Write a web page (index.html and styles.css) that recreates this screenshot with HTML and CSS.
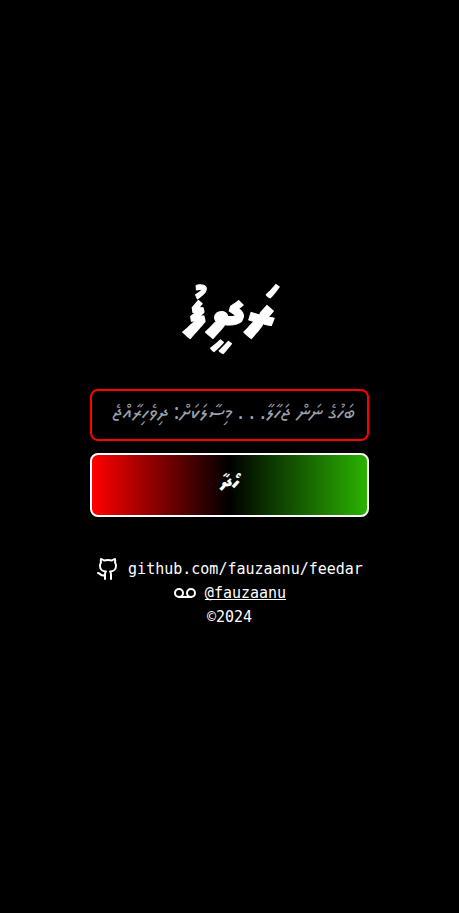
FILE: index.html
```html
<!DOCTYPE html>
<html lang="dv">
<head>
<meta charset="utf-8">
<meta name="viewport" content="width=device-width, initial-scale=1">
<title>ރަދީފު</title>
<link rel="stylesheet" href="styles.css">
</head>
<body>
<main class="page">
  <h1 class="title" dir="rtl">ރަދީފު</h1>
  <form class="search" dir="rtl">
    <input class="search-input" type="text" aria-label="ބަހުގެ ނަން" placeholder="ބަހުގެ ނަން ޖަހާލާ. . . މިސާލަކަށް: ދިވެހިރާއްޖެ">
    <button class="search-button" type="submit">ހޯދާ</button>
  </form>
  <footer class="footer" lang="en">
    <a class="footer-row" href="https://github.com/fauzaanu/feedar">
      <svg class="icon" viewBox="0 0 24 24" aria-hidden="true"><path d="M15 22v-4a4.8 4.8 0 0 0-1-3.5c3 0 6-2 6-5.5.08-1.25-.27-2.48-1-3.5.28-1.15.28-2.35 0-3.5 0 0-1 0-3 1.5-2.64-.5-5.36-.5-8 0C6 2 5 2 5 2c-.3 1.15-.3 2.35 0 3.5A5.403 5.403 0 0 0 4 9c0 3.5 3 5.5 6 5.5-.39.49-.68 1.05-.85 1.65-.17.6-.22 1.23-.15 1.85v4"/><path d="M9 18c-4.51 2-5-2-7-2"/></svg>
      <span>github.com/fauzaanu/feedar</span>
    </a>
    <div class="footer-row">
      <svg class="icon" viewBox="0 0 24 24" aria-hidden="true"><circle cx="6" cy="12" r="4"/><circle cx="18" cy="12" r="4"/><path d="M6 16h12"/></svg>
      <a class="author" href="https://github.com/fauzaanu">@fauzaanu</a>
    </div>
    <p class="footer-row">©2024</p>
  </footer>
</main>
</body>
</html>
```
FILE: styles.css
```css
* {
  box-sizing: border-box;
  margin: 0;
}

body {
  background: #000;
  color: #fff;
  font-family: "MV Boli", "Noto Sans Thaana", "Noto Sans", sans-serif;
}

.page {
  min-height: 100vh;
  display: flex;
  flex-direction: column;
  align-items: center;
  justify-content: center;
  padding: 16px 16px 36px;
}

.title {
  font-size: 64px;
  line-height: 96px;
  margin-bottom: 28px;
  -webkit-text-stroke: 1px #fff;
}

.search {
  width: 100%;
  max-width: 279px;
  display: flex;
  flex-direction: column;
  gap: 12px;
}

.search-input,
.search-button {
  width: 100%;
  border: 2px solid #fff;
  border-radius: 8px;
  color: #fff;
  font-family: inherit;
}

.search-input {
  height: 52px;
  padding: 0 12px 4px;
  border-color: #f00;
  background: #000;
  font-size: 21px;
}

.search-input::placeholder {
  color: #9ca3af;
  opacity: 1;
}

.search-button {
  height: 64px;
  padding: 0 0 4px;
  background: linear-gradient(to right, #f00, #000, #2ab300);
  background-origin: padding-box;
  font-size: 21px;
  font-weight: 700;
}

.footer {
  margin-top: 40px;
  font-family: Consolas, "DejaVu Sans Mono", monospace;
  font-size: 15px;
  line-height: 24px;
}

.footer-row {
  display: flex;
  align-items: center;
  justify-content: center;
  gap: 8px;
  color: inherit;
  text-decoration: none;
}

.author {
  color: inherit;
  text-decoration: underline;
  text-decoration-skip-ink: none;
}

.icon {
  width: 24px;
  height: 24px;
  fill: none;
  stroke: currentColor;
  stroke-width: 2;
  stroke-linecap: round;
  stroke-linejoin: round;
}
```
